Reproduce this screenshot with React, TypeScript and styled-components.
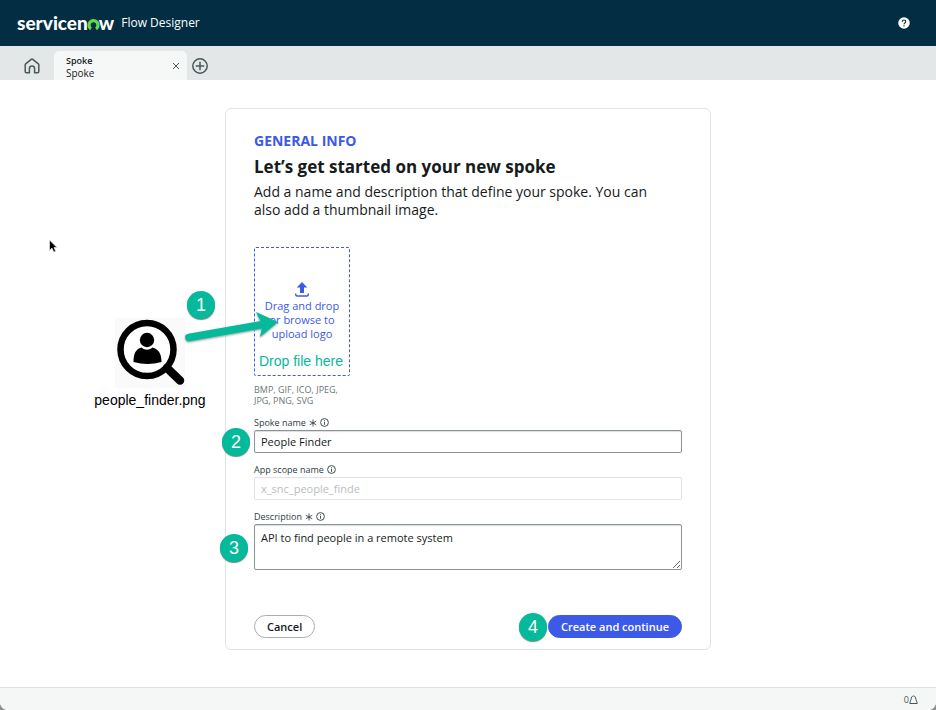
import React from "react";
import styled, { createGlobalStyle } from "styled-components";

const GlobalStyle = createGlobalStyle`
  *, *::before, *::after { box-sizing: border-box; }
  html { background: #8e9090; }
  body {
    margin: 0;
    color: #161b1c;
    font-family: "Open Sans", "Noto Sans", sans-serif;
  }
  button, input, textarea { font-family: inherit; color: inherit; }
`;

const teal = "#05b99b";
const blue = "#3c59e7";

const Page = styled.div`
  display: flex;
  flex-direction: column;
  min-height: 100vh;
  overflow: hidden;
  background: #fff;
  border-radius: 0 0 8px 8px;
`;

const Header = styled.header`
  display: flex;
  align-items: center;
  gap: 7px;
  height: 46px;
  padding: 0 26px 0 17px;
  background: #032d42;
  color: #fff;
`;

const Logo = styled.a`
  display: flex;
  align-items: baseline;
  color: #fff;
  font-family: Lato, sans-serif;
  font-size: 19px;
  font-weight: 900;
  line-height: 24px;
  text-decoration: none;
`;

const Product = styled.span`
  flex: 1;
  font-size: 12px;
  font-weight: 500;
  line-height: 18px;
`;

const IconButton = styled.button`
  display: flex;
  align-items: center;
  justify-content: center;
  padding: 0;
  border: 0;
  background: none;
  color: #4a5759;
  svg { display: block; }
`;

const TabBar = styled.nav`
  display: flex;
  align-items: flex-end;
  height: 34px;
  padding-left: 10px;
  background: #e3e7e7;
`;

const BarButton = styled(IconButton)<{ $width: number }>`
  width: ${(p) => p.$width}px;
  height: 29px;
`;

const Tab = styled.div`
  display: flex;
  align-items: center;
  justify-content: space-between;
  width: 133px;
  height: 29px;
  padding: 0 7px 0 12px;
  border-radius: 5px 5px 0 0;
  background: #f6f8f8;
`;

const TabText = styled.div`
  display: flex;
  flex-direction: column;
  padding-top: 3px;
  font-size: 10px;
  line-height: 12px;
  strong { font-size: 9px; font-weight: 600; }
`;

const Main = styled.main`
  position: relative;
  flex: 1;
  padding: 28px 16px 37px;
`;

const Card = styled.form`
  position: relative;
  max-width: 486px;
  margin: 0 auto;
  padding: 22px 28px 11px;
  border: 1px solid #dfe4e4;
  border-radius: 6px;
`;

const Eyebrow = styled.p`
  margin: 0;
  color: ${blue};
  font-size: 14px;
  font-weight: 700;
  line-height: 20px;
`;

const Title = styled.h1`
  margin: 4px 0;
  font-size: 17px;
  font-weight: 700;
  line-height: 24px;
`;

const Intro = styled.p`
  margin: 0;
  padding-right: 16px;
  font-size: 14px;
  line-height: 18px;
`;

const Upload = styled.div`
  position: relative;
  width: 96px;
  margin-top: 28px;
`;

const DropZone = styled.label`
  display: flex;
  flex-direction: column;
  align-items: center;
  height: 129px;
  padding: 34px 4px 0;
  border: 1px dashed ${blue};
  border-radius: 2px;
  color: ${blue};
  font-size: 11px;
  line-height: 14px;
  text-align: center;
  svg { flex: none; margin-bottom: 2px; }
`;

const FileInput = styled.input`
  position: absolute;
  width: 1px;
  height: 1px;
  opacity: 0;
`;

const DropNote = styled.span`
  position: absolute;
  top: 105px;
  left: 5px;
  color: ${teal};
  font-family: "Liberation Sans", Arial, sans-serif;
  font-size: 14px;
  line-height: 18px;
  white-space: nowrap;
`;

const Formats = styled.p`
  width: 96px;
  margin: 8px 0 9px;
  color: #6a7879;
  font-size: 9px;
  line-height: 11px;
`;

const Field = styled.div`
  position: relative;
  margin-bottom: 9px;
`;

const FieldLabel = styled.label`
  display: flex;
  align-items: center;
  gap: 3px;
  height: 15px;
  color: #2f3c3f;
  font-size: 9px;
  line-height: 15px;
`;

const TextInput = styled.input`
  display: block;
  width: 100%;
  height: 23px;
  padding: 0 6px;
  border: 1px solid #8b9596;
  border-radius: 2px;
  background: #fff;
  box-shadow: inset 0 1px 1px #dadddd;
  font-size: 11px;
  &:disabled { border-color: #e0e3e3; box-shadow: none; color: #b9bebe; }
`;

const TextArea = styled.textarea`
  display: block;
  width: 100%;
  height: 46px;
  padding: 4px 6px;
  border: 1px solid #8b9596;
  border-radius: 2px;
  box-shadow: inset 0 1px 1px #dadddd;
  font-size: 11px;
  line-height: 18px;
  resize: vertical;
`;

const Actions = styled.div`
  display: flex;
  justify-content: space-between;
  margin-top: 45px;
`;

const ActionWrap = styled.div`
  position: relative;
`;

const Button = styled.button<{ $primary?: boolean }>`
  display: block;
  height: 23px;
  padding: 0 12px;
  border: 1px solid ${(p) => (p.$primary ? blue : "#a7afb0")};
  border-radius: 12px;
  background: ${(p) => (p.$primary ? blue : "#fff")};
  color: ${(p) => (p.$primary ? "#fff" : "#161b1c")};
  font-size: 11px;
  font-weight: 600;
  line-height: 20px;
`;

const Step = styled.span<{ $left: number; $top: number }>`
  position: absolute;
  top: ${(p) => p.$top}px;
  left: ${(p) => p.$left}px;
  width: 28px;
  height: 28px;
  border-radius: 50%;
  background: ${teal};
  box-shadow: 0 1px 1px #6d8883;
  color: #fff;
  font-family: "Liberation Sans", Arial, sans-serif;
  font-size: 18px;
  line-height: 29px;
  text-align: center;
`;

const FileFigure = styled.figure`
  position: absolute;
  top: 209px;
  left: -136px;
  display: flex;
  flex-direction: column;
  align-items: center;
  gap: 3px;
  width: 120px;
  margin: 0;
  color: #000;
  font-family: "Liberation Sans", Arial, sans-serif;
  font-size: 14px;
  line-height: 18px;
`;

const Arrow = styled.svg`
  position: absolute;
  top: 195px;
  left: -46px;
  filter: drop-shadow(0 1px 1px #8a9a97);
  pointer-events: none;
`;

const Pointer = styled.svg`
  position: absolute;
  top: 159px;
  left: 48px;
`;

const Footer = styled.footer`
  display: flex;
  align-items: center;
  justify-content: flex-end;
  height: 23px;
  padding: 1px 18px 0 0;
  border-top: 1px solid #dde2e2;
  background: #f5f7f7;
  color: #4a5759;
  font-size: 9px;
`;

const InfoIcon = () => (
  <svg width="9" height="9" viewBox="0 0 18 18" fill="none" stroke="#2f3c3f" strokeWidth="1.8" aria-hidden="true">
    <circle cx="9" cy="9" r="7.8" />
    <path d="M9 8v5.5M9 4.6v2" />
  </svg>
);

const RequiredIcon = () => (
  <svg width="8" height="8" viewBox="0 0 16 16" stroke="#2f3c3f" strokeWidth="1.7" role="img" aria-label="required">
    <path d="M8 1v14M1.5 4.5l13 7M14.5 4.5l-13 7" />
  </svg>
);

export default function App() {
  return (
    <>
      <GlobalStyle />
      <Page>
        <Header>
          <Logo href="#" aria-label="servicenow">
            servicen
            <svg width="11" height="10" viewBox="0 0 11 10" overflow="visible" aria-hidden="true">
              <path d="M3 8.9A4.5 4.5 0 1 1 8 8.9" fill="none" stroke="#62d84e" strokeWidth="3.3" />
            </svg>
            w
          </Logo>
          <Product>Flow Designer</Product>
          <IconButton type="button" aria-label="Help">
            <svg width="12" height="12" viewBox="0 0 24 24">
              <circle cx="12" cy="12" r="11.5" fill="#fff" />
              <path d="M8.5 9.3c0-4.5 7-4.3 7-.2 0 2.5-3.4 2.7-3.4 5.4M12 16.5v2.6" fill="none" stroke="#032d42" strokeWidth="2.3" />
            </svg>
          </IconButton>
        </Header>

        <TabBar>
          <BarButton $width={44} type="button" aria-label="Home">
            <svg width="16" height="16" viewBox="0 0 16 16" fill="none" stroke="currentColor" strokeWidth="1.5" strokeLinejoin="round">
              <path d="M1.2 6.8Q1.2 6.2 1.7 5.8L7.2 1.4q.8-.6 1.6 0l5.5 4.4q.5.4.5 1v6.8q0 1.200-1.200 1.200h-3v-4.300a2.600 2.600 0 0 0-5.200 0v4.300h-3q-1.200 0-1.200-1.200z" />
            </svg>
          </BarButton>
          <Tab>
            <TabText><strong>Spoke</strong><span>Spoke</span></TabText>
            <IconButton type="button" aria-label="Close tab">
              <svg width="8" height="8" viewBox="0 0 8 8" stroke="currentColor">
                <path d="M1 1l6 6M7 1l-6 6" />
              </svg>
            </IconButton>
          </Tab>
          <BarButton $width={26} type="button" aria-label="New tab">
            <svg width="16" height="16" viewBox="0 0 16 16" fill="none" stroke="currentColor" strokeWidth="1.5">
              <circle cx="8" cy="8" r="7.2" />
              <path d="M8 3.8v8.4M3.8 8h8.4" />
            </svg>
          </BarButton>
        </TabBar>

        <Main>
          <Pointer width="10" height="16" viewBox="0 0 10 16" aria-hidden="true">
            <path d="M1.5 1v10.5l2.5-2.4L5.7 13l2-.8L6 8.5h3z" fill="#000" stroke="#ddd" strokeWidth=".8" />
          </Pointer>
          <Card onSubmit={(e) => e.preventDefault()}>
            <Eyebrow>GENERAL INFO</Eyebrow>
            <Title>Let’s get started on your new spoke</Title>
            <Intro>Add a name and description that define your spoke. You can also add a thumbnail image.</Intro>

            <Upload>
              <FileInput id="logo" type="file" />
              <DropZone htmlFor="logo">
                <svg width="14" height="15" viewBox="0 0 14 15" fill={blue} aria-hidden="true">
                  <path d="M7 0l5.3 5.5H9V11H5V5.5H1.7z" />
                  <path d="M.7 11.5v1q0 1.5 1.5 1.5h9.6q1.5 0 1.5-1.5v-1" fill="none" stroke={blue} strokeWidth="1.4" />
                </svg>
                Drag and drop or browse to upload logo
              </DropZone>
              <DropNote>Drop file here</DropNote>
            </Upload>
            <Formats>BMP, GIF, ICO, JPEG, JPG, PNG, SVG</Formats>

            <Field>
              <FieldLabel htmlFor="name">Spoke name <RequiredIcon /><InfoIcon /></FieldLabel>
              <TextInput id="name" defaultValue="People Finder" />
              <Step $left={-32} $top={13}>2</Step>
            </Field>
            <Field>
              <FieldLabel htmlFor="scope">App scope name <InfoIcon /></FieldLabel>
              <TextInput id="scope" defaultValue="x_snc_people_finde" disabled />
            </Field>
            <Field>
              <FieldLabel htmlFor="description">Description <RequiredIcon /><InfoIcon /></FieldLabel>
              <TextArea id="description" defaultValue="API to find people in a remote system" />
              <Step $left={-34} $top={25}>3</Step>
            </Field>

            <Actions>
              <Button type="button">Cancel</Button>
              <ActionWrap>
                <Button type="submit" $primary>Create and continue</Button>
                <Step $left={-29} $top={-2}>4</Step>
              </ActionWrap>
            </Actions>

            <FileFigure>
              <svg width="70" height="70" viewBox="0 0 70 70" aria-hidden="true">
                <rect width="70" height="70" fill="#fafafa" />
                <circle cx="32" cy="31.5" r="26.5" fill="#fff" stroke="#000" strokeWidth="6.5" />
                <path d="M52 50l13 12.5" stroke="#000" strokeWidth="8.5" strokeLinecap="round" />
                <circle cx="32" cy="22" r="7.2" />
                <path d="M18.5 44c0-8 2-13 8-14.500 3.500 3 7.500 3 11 0 6 1.500 9 6.500 9 14.500q-14 4-28 0z" />
              </svg>
              <figcaption>people_finder.png</figcaption>
            </FileFigure>
            <Step $left={-39} $top={182}>1</Step>
            <Arrow width="104" height="40" viewBox="0 0 104 40" aria-hidden="true">
              <path d="M9 33.5L80 21" stroke={teal} strokeWidth="7.500" strokeLinecap="round" />
              <path d="M76 8L98 18 80 33 82.500 21z" fill={teal} />
            </Arrow>
          </Card>
        </Main>

        <Footer>
          0
          <svg width="9" height="10" viewBox="0 0 18 20" fill="none" stroke="currentColor" strokeWidth="2" aria-hidden="true">
            <path d="M9 2c-3.500 0-4.200 3-4.800 6.500C3.700 12 1.500 14 1.500 17h15c0-3-2.200-5-2.700-8.500C13.200 5 12.500 2 9 2z" />
          </svg>
        </Footer>
      </Page>
    </>
  );
}
